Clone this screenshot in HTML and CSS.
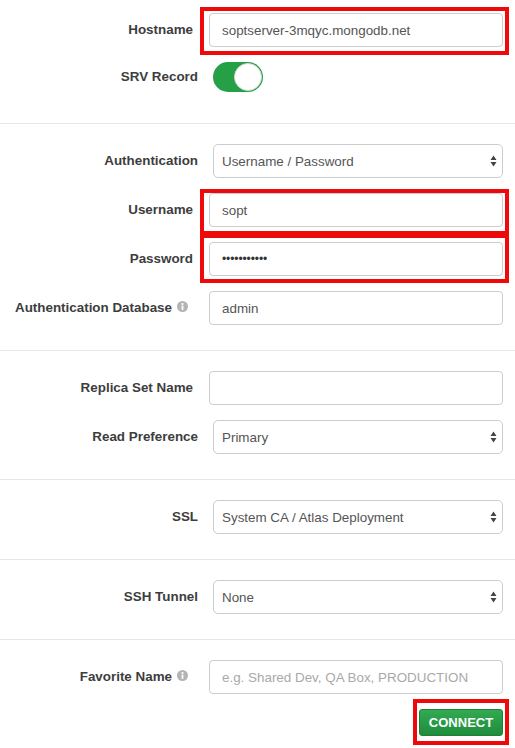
FILE: index.html
```html
<!DOCTYPE html>
<html>
<head>
<meta charset="utf-8">
<link rel="stylesheet" href="styles.css">
</head>
<body>
<form class="form">
  <section class="section section--first">
    <div class="row">
      <label class="label">Hostname</label>
      <div class="field">
        <input class="control" type="text" value="soptserver-3mqyc.mongodb.net">
        <span class="mark"></span>
      </div>
    </div>
    <div class="row row--short">
      <label class="label label--select">SRV Record</label>
      <div class="field field--select">
        <span class="toggle"><span class="knob"></span></span>
      </div>
    </div>
  </section>

  <section class="section">
    <div class="row">
      <label class="label label--select">Authentication</label>
      <div class="field field--select">
        <select class="control select"><option>Username / Password</option></select>
        <svg class="arrows" width="7" height="12" viewBox="0 0 7 12"><path d="M3.5 0.5 L6.5 5 L0.5 5 Z M0.5 7 L6.5 7 L3.5 11.5 Z" fill="#444"/></svg>
      </div>
    </div>
    <div class="row">
      <label class="label">Username</label>
      <div class="field">
        <input class="control" type="text" value="sopt">
        <span class="mark mark--top"></span>
      </div>
    </div>
    <div class="row">
      <label class="label">Password</label>
      <div class="field">
        <input class="control control--pw" type="password" value="abcdefghijk">
        <span class="mark mark--bottom"></span>
      </div>
    </div>
    <div class="row">
      <label class="label label--info">Authentication Database
        <svg class="info" width="11" height="11" viewBox="0 0 11 11"><circle cx="5.5" cy="5.5" r="5.5" fill="#b4b4b4"/><circle cx="5.5" cy="3" r="1.1" fill="#fff"/><rect x="4.6" y="4.6" width="1.8" height="4.2" fill="#fff"/></svg>
      </label>
      <div class="field">
        <input class="control" type="text" value="admin">
      </div>
    </div>
  </section>

  <section class="section">
    <div class="row">
      <label class="label">Replica Set Name</label>
      <div class="field">
        <input class="control" type="text" value="">
      </div>
    </div>
    <div class="row">
      <label class="label label--select">Read Preference</label>
      <div class="field field--select">
        <select class="control select"><option>Primary</option></select>
        <svg class="arrows" width="7" height="12" viewBox="0 0 7 12"><path d="M3.5 0.5 L6.5 5 L0.5 5 Z M0.5 7 L6.5 7 L3.5 11.5 Z" fill="#444"/></svg>
      </div>
    </div>
  </section>

  <section class="section">
    <div class="row">
      <label class="label label--select">SSL</label>
      <div class="field field--select">
        <select class="control select"><option>System CA / Atlas Deployment</option></select>
        <svg class="arrows" width="7" height="12" viewBox="0 0 7 12"><path d="M3.5 0.5 L6.5 5 L0.5 5 Z M0.5 7 L6.5 7 L3.5 11.5 Z" fill="#444"/></svg>
      </div>
    </div>
  </section>

  <section class="section">
    <div class="row">
      <label class="label label--select">SSH Tunnel</label>
      <div class="field field--select">
        <select class="control select"><option>None</option></select>
        <svg class="arrows" width="7" height="12" viewBox="0 0 7 12"><path d="M3.5 0.5 L6.5 5 L0.5 5 Z M0.5 7 L6.5 7 L3.5 11.5 Z" fill="#444"/></svg>
      </div>
    </div>
  </section>

  <section class="section section--last">
    <div class="row">
      <label class="label label--info">Favorite Name
        <svg class="info" width="11" height="11" viewBox="0 0 11 11"><circle cx="5.5" cy="5.5" r="5.5" fill="#b4b4b4"/><circle cx="5.5" cy="3" r="1.1" fill="#fff"/><rect x="4.6" y="4.6" width="1.8" height="4.2" fill="#fff"/></svg>
      </label>
      <div class="field">
        <input class="control" type="text" placeholder="e.g. Shared Dev, QA Box, PRODUCTION">
      </div>
    </div>
    <div class="actions">
      <div class="btn-wrap">
        <button type="button" class="btn">CONNECT</button>
        <span class="mark mark--btn"></span>
      </div>
    </div>
  </section>
</form>
</body>
</html>
```

FILE: styles.css
```css
html, body {
  margin: 0;
  padding: 0;
  background: #fff;
  overflow: hidden;
}
body {
  font-family: "Liberation Sans", Arial, sans-serif;
  font-size: 13.4px;
  color: #444;
  width: 515px;
  height: 748px;
}
.form {
  display: flex;
  flex-direction: column;
}
.section {
  display: flex;
  flex-direction: column;
  gap: 15px;
  padding: 20px 12px 25px 0;
  border-top: 1px solid #e6e6e6;
}
.section--first {
  border-top: none;
  padding-top: 13px;
  padding-bottom: 31px;
}
.section--last {
  padding-bottom: 0;
}
.row {
  display: grid;
  grid-template-columns: 209px 1fr;
  align-items: center;
  height: 34px;
}
.row--short {
  height: 30px;
}
.label {
  justify-self: end;
  padding-right: 16px;
  padding-bottom: 2px;
  font-weight: bold;
  color: #3d3d3d;
  white-space: nowrap;
  display: flex;
  align-items: center;
  gap: 5px;
}
.label--select {
  padding-right: 11px;
}
.label--info {
  padding-right: 21px;
}
.info {
  display: block;
  margin-top: -1px;
}
.field {
  position: relative;
  height: 100%;
}
.field--select {
  margin-left: 4px;
}
.control {
  box-sizing: border-box;
  width: 100%;
  height: 34px;
  margin: 0;
  border: 1px solid #cccccc;
  border-radius: 4px;
  padding: 0 12px;
  font-family: "Liberation Sans", Arial, sans-serif;
  font-size: 13.4px;
  color: #555;
  background: #fff;
  outline: none;
}
.control::placeholder {
  color: #a9a9a9;
}
.control--pw {
  font-size: 12px;
  letter-spacing: -0.1px;
  color: #333;
}
.select {
  appearance: none;
  -webkit-appearance: none;
  padding-left: 8px;
  border-radius: 5px;
}
.arrows {
  position: absolute;
  right: 6px;
  top: 11px;
  pointer-events: none;
}
.toggle {
  display: block;
  position: relative;
  width: 50px;
  height: 30px;
  border-radius: 15px;
  background: #26a046;
}
.knob {
  position: absolute;
  right: 1px;
  top: 1px;
  width: 26px;
  height: 26px;
  border-radius: 50%;
  background: #fff;
  border: 1px solid #d8d8d8;
}
.mark {
  position: absolute;
  left: -9px;
  right: -6px;
  top: -6px;
  bottom: -8px;
  border: 4.5px solid #ee0a0a;
  pointer-events: none;
}
.mark--top {
  top: -4px;
  bottom: -8px;
}
.mark--bottom {
  top: -8px;
  bottom: -7px;
}
.actions {
  display: flex;
  justify-content: flex-end;
}
.btn-wrap {
  position: relative;
}
.btn {
  display: block;
  width: 84px;
  height: 27px;
  border: 1px solid #1d8236;
  border-radius: 3px;
  background: linear-gradient(#32aa52, #1f8c3c);
  color: #fff;
  font-family: "Liberation Sans", Arial, sans-serif;
  font-weight: bold;
  font-size: 13px;
  padding: 0;
}
.mark--btn {
  left: -6px;
  right: -6px;
  top: -10px;
  bottom: -9px;
}
```
